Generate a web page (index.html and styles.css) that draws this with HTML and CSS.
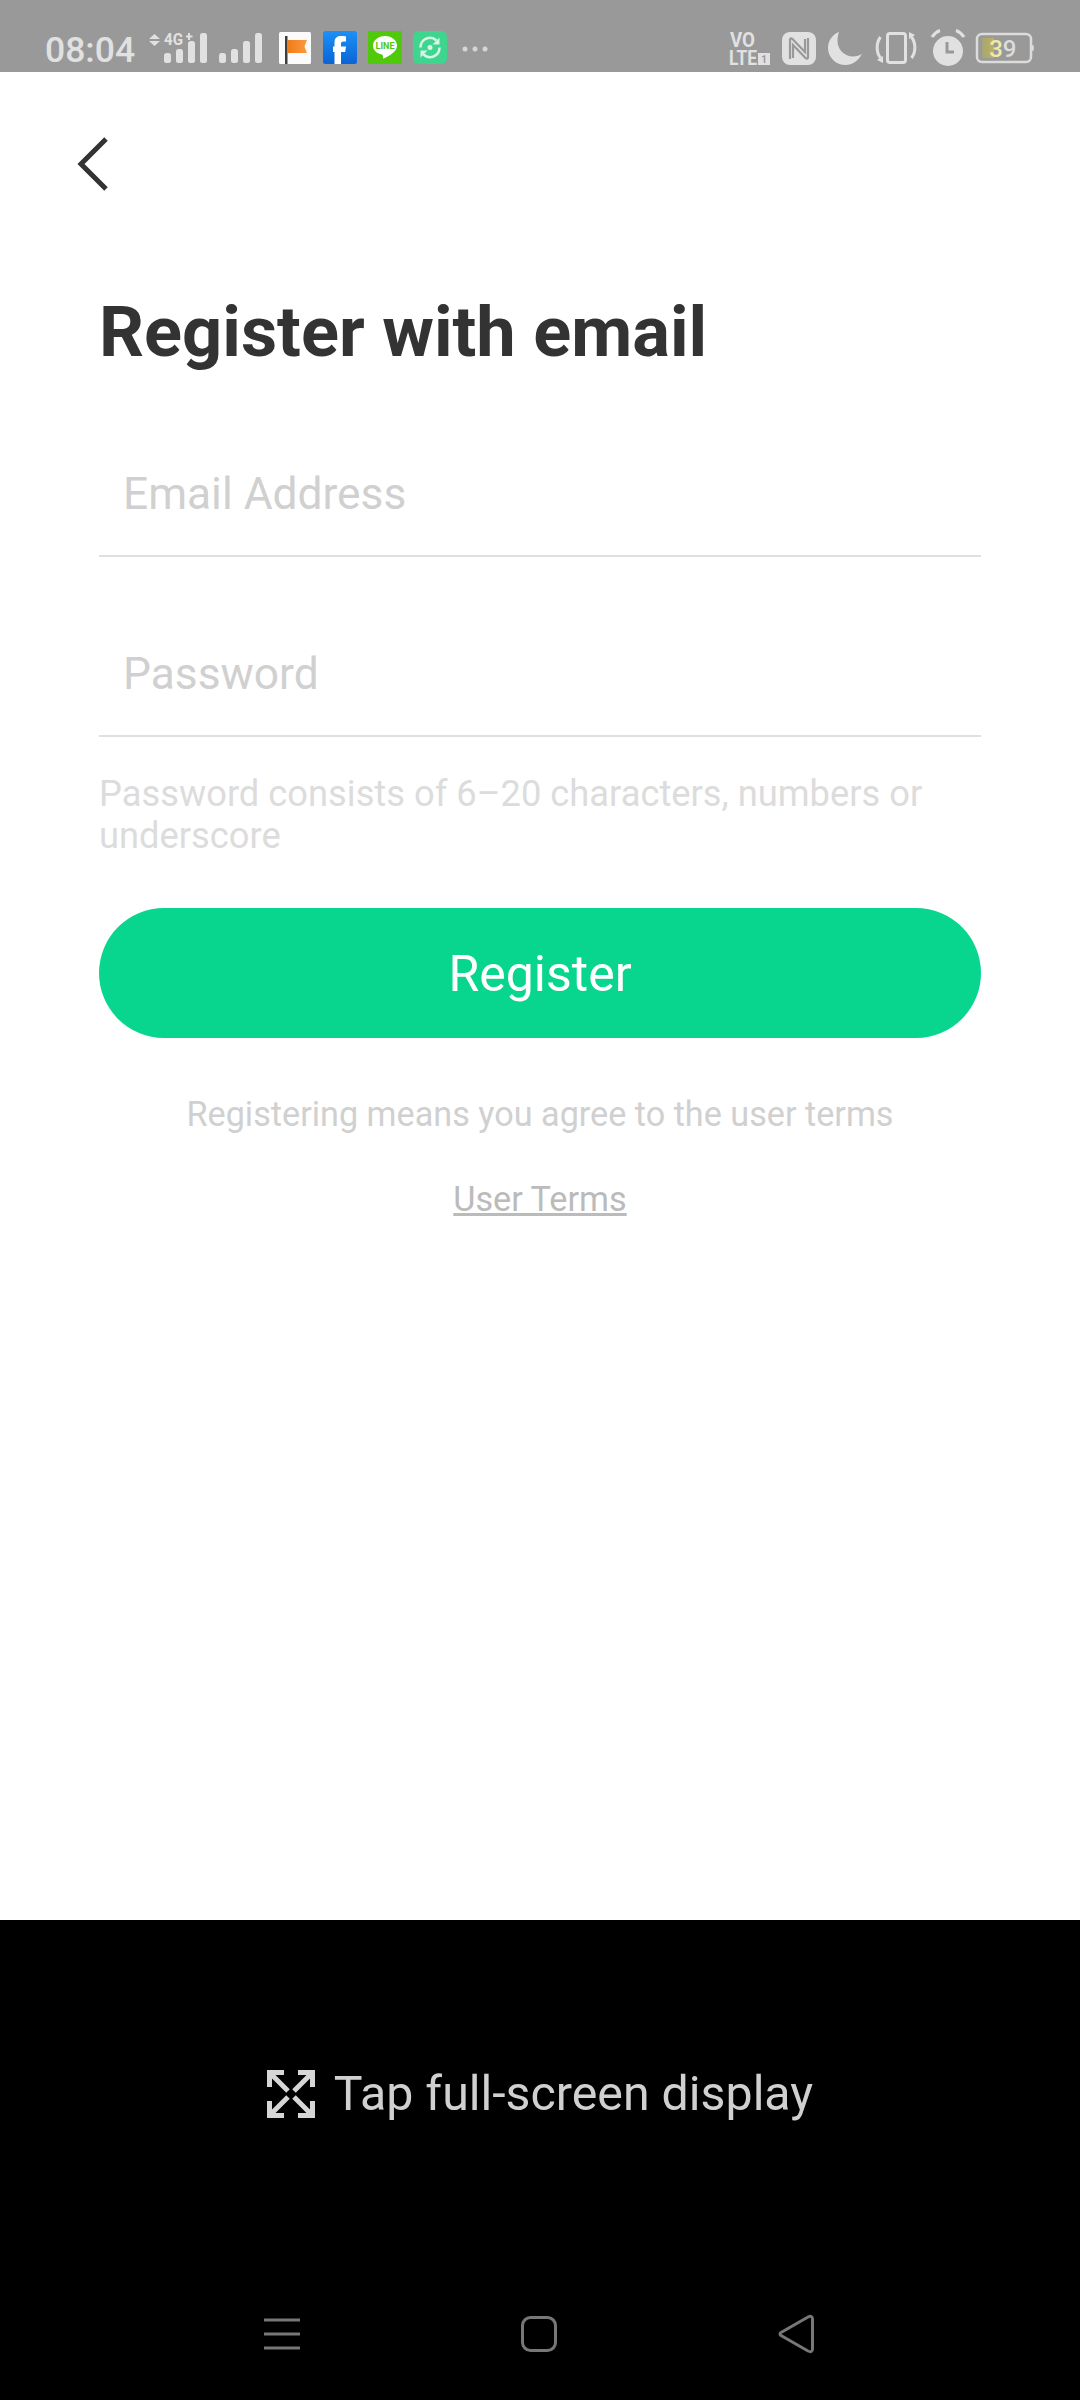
FILE: index.html
```html
<!DOCTYPE html>
<html lang="en">
<head>
<meta charset="utf-8">
<title>Register with email</title>
<link rel="stylesheet" href="styles.css">
</head>
<body>
<div class="screen">
  <header class="status">
    <div class="status-left">
      <span class="time">08:04</span>
      <svg class="net" width="113" height="32" viewBox="0 0 113 32">
        <path d="M0 7 5.500 2 11 7ZM0 9 5.500 14 11 9Z" fill="#e1e1e1"/>
        <text x="15" y="13" class="net-text" textLength="19" lengthAdjust="spacingAndGlyphs">4G</text>
        <path d="M37 3.500h2v-2.500h2v2.500h2.500v2h-2.500v2.500h-2v-2.500h-2Z" fill="#e1e1e1"/>
        <g fill="#e1e1e1">
          <rect x="15" y="21" width="7" height="10" rx="2.500"/>
          <rect x="27" y="17" width="7" height="14" rx="2.500"/>
          <rect x="39" y="9" width="7" height="22" rx="2.500"/>
          <rect x="51" y="1" width="7" height="30" rx="2.500"/>
          <rect x="70" y="21" width="7" height="10" rx="2.500"/>
          <rect x="82" y="17" width="7" height="14" rx="2.500"/>
          <rect x="94" y="9" width="7" height="22" rx="2.500"/>
          <rect x="106" y="1" width="7" height="30" rx="2.500"/>
        </g>
      </svg>
      <svg class="app flag" width="32" height="32" viewBox="0 0 32 32">
        <defs><linearGradient id="flagg" x1="0" y1="0" x2="1" y2="0"><stop offset="0" stop-color="#f07a18"/><stop offset="1" stop-color="#fb9a3c"/></linearGradient></defs>
        <rect width="32" height="32" rx="1.500" fill="#fbfbfb"/>
        <rect x="6" y="4" width="2.500" height="28" fill="#3d3d3d"/>
        <path d="M8 8H28L25.500 14.500 28 21H8Z" fill="url(#flagg)"/>
      </svg>
      <svg class="app fb" width="34" height="33" viewBox="0 0 34 33">
        <defs><linearGradient id="fbg" x1="0" y1="0" x2="0" y2="1"><stop offset="0" stop-color="#1d90f7"/><stop offset="1" stop-color="#0a64d6"/></linearGradient></defs>
        <rect width="34" height="33" rx="2.500" fill="url(#fbg)"/>
        <path d="M11.500 33V21H10V15.500H11.500V11.500C11.500 6.500 14.500 5 18 5 20 5 22 5.200 23 5.400V10.500H20.500C18.800 10.500 18 11.300 18 12.800V15.500H23L22.200 21H18V33Z" fill="#fff"/>
      </svg>
      <svg class="app line" width="34" height="33" viewBox="0 0 34 33">
        <rect width="34" height="33" rx="1.500" fill="#4fc90a"/>
        <path d="M17 5C10 5 5 9.500 5 14.500 5 19 8.500 22.500 14 23.500 15 23.800 15 26 15 27.500 16 28 22 24.500 25 21.800 27.500 19.800 29 17.500 29 14.500 29 9.500 24 5 17 5Z" fill="#fff"/>
        <text x="17" y="18" class="line-text">LINE</text>
      </svg>
      <svg class="app sync" width="34" height="33" viewBox="0 0 34 33">
        <rect width="34" height="33" rx="6" fill="#3ed58f"/>
        <path d="M7.500 16.500A9.500 9.500 0 0 1 23.500 9.500M26.500 16.500A9.500 9.500 0 0 1 10.500 23.500" fill="none" stroke="#d8f5e8" stroke-width="2.500"/>
        <path d="M26.500 6.500V13.500H19.500ZM7.500 26.500V19.500H14.500Z" fill="#d8f5e8"/>
        <circle cx="17" cy="16.500" r="2.500" fill="#d8f5e8"/>
      </svg>
      <svg class="dots" width="26" height="6" viewBox="0 0 26 6" fill="#d6d6d6">
        <circle cx="3" cy="3" r="2.500"/><circle cx="13" cy="3" r="2.500"/><circle cx="23" cy="3" r="2.500"/>
      </svg>
    </div>
    <div class="status-right">
      <svg class="volte" width="42" height="34" viewBox="0 0 42 34">
        <text x="1" y="15" class="vo" textLength="25" lengthAdjust="spacingAndGlyphs">VO</text>
        <text x="0" y="33" class="lte" textLength="28" lengthAdjust="spacingAndGlyphs">LTE</text>
        <rect x="29" y="21" width="12" height="12" fill="#e1e1e1"/>
        <text x="35" y="31" class="sim">1</text>
      </svg>
      <svg class="nfc" width="34" height="33" viewBox="0 0 34 33">
        <rect width="34" height="33" rx="8" fill="#e1e1e1"/>
        <path d="M8 27V7.500C8 6 9.500 6 10.500 7L23 20V7M26 6V25.500C26 27 24.500 27 23.500 26L11 13V26" fill="none" stroke="#999" stroke-width="2.200"/>
      </svg>
      <svg class="moon" width="34" height="33" viewBox="0 0 34 33">
        <path d="M11 0C4.500 2.500 0 8.500 0 16 0 25.500 8 33 17.500 33 24.500 33 30.500 28.500 34 22 31.500 23.500 28.500 24.500 25 24.500 16.500 24.500 9.500 17.500 9.500 9 9.500 5.500 10 2.500 11 0Z" fill="#e1e1e1"/>
      </svg>
      <svg class="vibrate" width="44" height="32" viewBox="0 0 44 32">
        <rect x="13.500" y="1.500" width="18" height="29" rx="2.500" fill="none" stroke="#e1e1e1" stroke-width="3"/>
        <path d="M6.500 5C2 11 2 20 6.500 26M37.500 5C42 11 42 20 37.500 26" fill="none" stroke="#e1e1e1" stroke-width="3"/>
        <path d="M9 24V31L3 28ZM35 7V0L41 3Z" fill="#e1e1e1"/>
      </svg>
      <svg class="alarm" width="36" height="38" viewBox="0 0 36 38">
        <circle cx="18" cy="23" r="15" fill="#e1e1e1"/>
        <path d="M17 14V24H24" fill="none" stroke="#999" stroke-width="3"/>
        <path d="M2 9C4 6 7 3.500 10 2.500M34 9C32 6 29 3.500 26 2.500" fill="none" stroke="#e1e1e1" stroke-width="3"/>
      </svg>
      <svg class="battery" width="61" height="32" viewBox="0 0 61 32">
        <defs><linearGradient id="battg" x1="0" y1="0" x2="1" y2="0"><stop offset="0" stop-color="#a9a476"/><stop offset="1" stop-color="#bdb25c"/></linearGradient></defs>
        <rect x="2" y="2" width="54" height="28" rx="5" fill="none" stroke="#dcdcdc" stroke-width="2.500"/>
        <rect x="7" y="6" width="12" height="20" fill="url(#battg)"/>
        <path d="M56 13H58Q60 16 58 19H56Z" fill="#dcdcdc"/>
        <text x="21" y="25" class="batt batt-a">3</text>
        <text x="34.500" y="25" class="batt">9</text>
      </svg>
    </div>
  </header>

  <main class="page">
    <svg class="back" width="32" height="54" viewBox="0 0 32 54">
      <path d="M30 2 5 27 30 52" fill="none" stroke="#333" stroke-width="5"/>
    </svg>
    <h1 class="title">Register with email</h1>
    <div class="field"><span class="placeholder">Email Address</span></div>
    <div class="field field-second"><span class="placeholder">Password</span></div>
    <p class="hint">Password consists of 6–20 characters, numbers or underscore</p>
    <button class="submit" type="button">Register</button>
    <p class="agree">Registering means you agree to the user terms</p>
    <a class="terms" href="#">User Terms</a>
  </main>

  <footer class="bottom">
    <div class="fullscreen">
      <svg class="fs-icon" width="48" height="48" viewBox="0 0 48 48">
        <g fill="none" stroke="#d6d6d6" stroke-width="5">
          <path d="M2.500 17V2.500H17M31 2.500H45.500V17M2.500 31V45.500H17M31 45.500H45.500V31"/>
          <path d="M4 4 21 21M44 4 27 21M4 44 21 27M44 44 27 27"/>
        </g>
      </svg>
      <span class="fs-text">Tap full-screen display</span>
    </div>
    <nav class="nav">
      <svg width="36" height="32" viewBox="0 0 36 32">
        <path d="M0 2H36M0 16H36M0 30H36" stroke="#777" stroke-width="3"/>
      </svg>
      <svg width="36" height="36" viewBox="0 0 36 36">
        <rect x="1.500" y="1.500" width="33" height="33" rx="8" fill="none" stroke="#777" stroke-width="3"/>
      </svg>
      <svg width="36" height="38" viewBox="0 0 36 38">
        <path d="M3 17.500 30 2Q34.500 0 34.500 4V34Q34.500 38 30 36L3 20.500Q1 19 3 17.500Z" fill="none" stroke="#777" stroke-width="3"/>
      </svg>
    </nav>
  </footer>
</div>
</body>
</html>
```

FILE: styles.css
```css
* { box-sizing: border-box; }
html, body { margin: 0; padding: 0; background: #fff; }
body { font-family: Roboto, "Noto Sans", sans-serif; }
svg { display: block; flex: none; overflow: visible; }
.screen { width: 1080px; height: 2400px; display: flex; flex-direction: column; overflow: hidden; }

.status { height: 72px; background: #999; flex: none; display: flex; justify-content: space-between; padding: 32px 44px 0 45px; color: #e1e1e1; }
.status-left, .status-right { display: flex; align-items: flex-start; }
.time { font-size: 35.500px; font-weight: 500; line-height: 36px; width: 89px; }
.net { margin-left: 15px; }
.net-text { font: 700 17px "Roboto", sans-serif; fill: #e1e1e1; }
.flag { margin-left: 17px; }
.fb { margin-left: 12px; margin-top: -1px; }
.line { margin-left: 11px; margin-top: -1px; }
.sync { margin-left: 11px; margin-top: -1px; }
.dots { margin-left: 15px; margin-top: 14px; }
.line-text { font: 700 9px "Roboto", sans-serif; fill: #4fc90a; text-anchor: middle; }
.vo { font: 700 20px "Roboto", sans-serif; fill: #e1e1e1; }
.lte { font: 700 20px "Roboto", sans-serif; fill: #e1e1e1; }
.sim { font: 700 10px "Roboto", sans-serif; fill: #999; text-anchor: middle; }
.nfc { margin-left: 11px; }
.moon { margin-left: 12px; }
.vibrate { margin-left: 12px; }
.alarm { margin-left: 12px; margin-top: -4px; }
.battery { margin-left: 9px; }
.batt { font: 500 24px "Roboto", sans-serif; fill: #dcdcdc; text-anchor: middle; }
.batt-a { fill: #efe9ab; }

.page { flex: 1; background: #fff; padding: 65px 99px 0; display: flex; flex-direction: column; }
.back { margin-left: -23px; }
.title { margin: 101px 0 0; font-size: 70.400px; line-height: 80px; font-weight: 700; color: #333; }
.field { height: 124px; margin-top: 61px; border-bottom: 2px solid #e0e0e0; padding: 0 24px; display: flex; align-items: center; flex: none; }
.field-second { margin-top: 56px; }
.placeholder { font-size: 44.300px; line-height: 52px; color: #d0d0d0; }
.hint { margin: 36px 0 0; font-size: 36.300px; line-height: 42px; color: #dcdcdc; }
.submit { margin-top: 51px; height: 130px; flex: none; border: 0; padding: 2px 0 0; border-radius: 65px; background: #08d68f; color: #fff; font: 400 50px Roboto, sans-serif; }
.agree { margin: 56px 0 0; text-align: center; font-size: 34.200px; line-height: 40px; color: #d0d0d0; }
.terms { margin-top: 45px; align-self: center; font-size: 34.200px; line-height: 40px; color: #bbb; text-decoration: underline; }

.bottom { height: 480px; flex: none; background: #000; display: flex; flex-direction: column; }
.fullscreen { display: flex; align-items: center; justify-content: center; gap: 19px; padding-top: 146px; }
.fs-text { font-size: 48.300px; line-height: 56px; color: #d0d0d0; }
.nav { margin-top: auto; height: 132px; padding: 0 266px 0 264px; display: flex; align-items: center; justify-content: space-between; }
```
